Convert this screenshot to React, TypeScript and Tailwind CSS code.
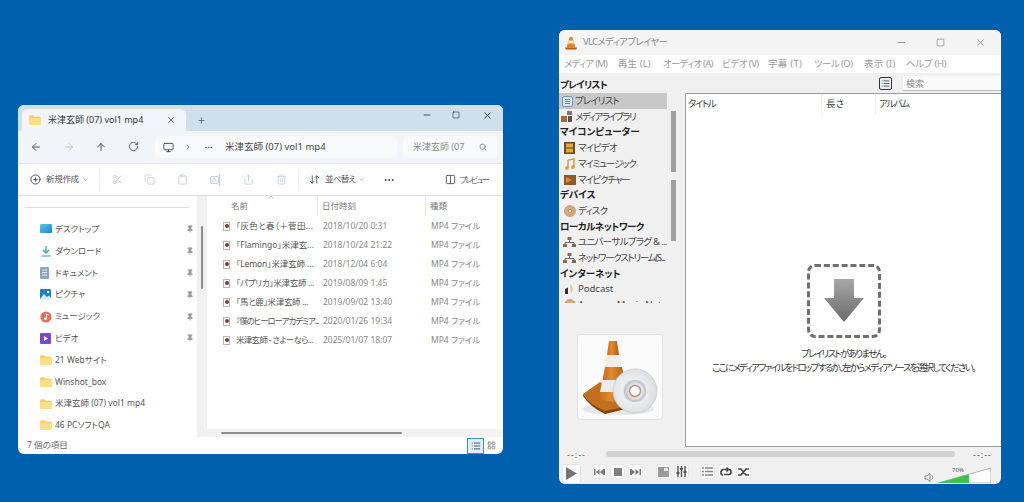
import React from "react";
import { ArrowLeft, ArrowRight, ArrowUp, RotateCw, Monitor, ChevronRight, Ellipsis, Search, Scissors, Copy, Clipboard, Share, Trash2, ArrowDownUp, ChevronDown, ChevronUp, Plus, X, Minus, Square, Pin, Columns2, CirclePlus, List, LayoutGrid } from "lucide-react";

const jp = "font-['Noto_Sans','Noto_Sans_CJK_JP',sans-serif] [font-feature-settings:'palt']";

function Folder({ s = 12 }: { s?: number }) {
  return (
    <svg width={s} height={s * 0.85} viewBox="0 0 16 13" className="shrink-0">
      <path d="M0 2 Q0 0 2 0 H6 L8 2 H14 Q16 2 16 4 V11 Q16 13 14 13 H2 Q0 13 0 11 Z" fill="#f6cf62" />
      <path d="M0 4 H16 V11 Q16 13 14 13 H2 Q0 13 0 11 Z" fill="#fbdf8c" />
    </svg>
  );
}

function NavIcon({ kind }: { kind: string }) {
  if (kind === "desktop")
    return (
      <svg width="12" height="10" viewBox="0 0 12 10"><defs><linearGradient id="dg" x1="0" y1="0" x2="1" y2="1"><stop offset="0" stopColor="#62c6e8" /><stop offset="1" stopColor="#1a86c4" /></linearGradient></defs><rect width="12" height="9" rx="1" fill="url(#dg)" /></svg>
    );
  if (kind === "down")
    return (
      <svg width="12" height="12" viewBox="0 0 12 12"><path d="M6 1 V8 M3 5 L6 8 L9 5" stroke="#3fa3a8" strokeWidth="1.3" fill="none" /><path d="M1.5 11 H10.5" stroke="#5bb6bb" strokeWidth="1.3" /></svg>
    );
  if (kind === "doc")
    return (
      <svg width="10" height="12" viewBox="0 0 10 12"><rect width="9" height="12" rx="1" fill="#8ea3c2" /><path d="M2 3 H7 M2 5.5 H7 M2 8 H7" stroke="#dfe6f0" strokeWidth="1" /></svg>
    );
  if (kind === "pic")
    return (
      <svg width="11" height="11" viewBox="0 0 11 11"><rect width="11" height="11" rx="1" fill="#1b80c9" /><path d="M0 10 L4 5 L7 8 L9 6.5 L11 9 V11 H0 Z" fill="#d4eefa" /><circle cx="8" cy="3" r="1.2" fill="#fff" /></svg>
    );
  if (kind === "music")
    return (
      <svg width="12" height="12" viewBox="0 0 12 12"><circle cx="6" cy="6" r="5.6" fill="#e0705f" /><path d="M6.5 3 V7.5 M6.5 3 L8.5 3.8" stroke="#fff" strokeWidth="1" fill="none" /><circle cx="5.3" cy="7.8" r="1.3" fill="#fff" /></svg>
    );
  if (kind === "video")
    return (
      <svg width="11" height="11" viewBox="0 0 11 11"><rect width="11" height="11" rx="1" fill="#7d4bc9" /><path d="M4 3 L8 5.5 L4 8 Z" fill="#fff" /></svg>
    );
  return <Folder />;
}

const navItems: [string, string, boolean][] = [
  ["desktop", "デスクトップ", true],
  ["down", "ダウンロード", true],
  ["doc", "ドキュメント", true],
  ["pic", "ピクチャ", true],
  ["music", "ミュージック", true],
  ["video", "ビデオ", true],
  ["folder", "21 Webサイト", false],
  ["folder", "Winshot_box", false],
  ["folder", "米津玄師 (07) vol1 mp4", false],
  ["folder", "46 PCソフトQA", false],
];

const files = [
  ["「灰色と春（＋菅田...", "2018/10/20 0:31", "tracking-[0.3px]"],
  ["「Flamingo」米津玄...", "2018/10/24 21:22", "tracking-[0px]"],
  ["「Lemon」米津玄師 ...", "2018/12/04 6:04", "tracking-[-0.1px]"],
  ["「パプリカ」米津玄師 ...", "2019/08/09 1:45", "tracking-[-0.3px]"],
  ["「馬と鹿」米津玄師 ...", "2019/09/02 13:40", "tracking-[-0.3px]"],
  ["『僕のヒーローアカデミア...", "2020/01/26 19:34", "tracking-[-1.1px]"],
  ["米津玄師 - さよーなら...", "2025/01/07 18:07", "tracking-[-0.7px]"],
];

function FileIcon() {
  return (
    <span className="w-[7px] h-[9px] border border-[#b5b5b5] bg-white flex items-center justify-center shrink-0 mr-[6px]">
      <span className="w-[4px] h-[4px] rounded-full bg-[#7c3b3b]" />
    </span>
  );
}

function ToolBtn({ children }: { children: React.ReactNode }) {
  return <div className="w-[32.8px] flex justify-center text-[#c3d0da]">{children}</div>;
}

function Explorer() {
  return (
    <div className={`absolute left-[18px] top-[105px] w-[485px] h-[349px] rounded-[6px] overflow-hidden bg-white flex flex-col ${jp} text-[#444]`}>
      <div className="h-[26px] bg-[#cfe0ec] flex items-end pl-[4px] shrink-0">
        <div className="w-[164px] h-[22px] bg-[#f2f6fa] rounded-t-[6px] flex items-center pl-[7px]">
          <Folder s={12} />
          <span className="ml-[7px] text-[9px] text-[#333] flex-1 whitespace-nowrap">米津玄師 (07) vol1 mp4</span>
          <X size={10} className="mr-[10px] text-[#444]" />
        </div>
        <div className="w-[30px] h-[22px] flex items-center justify-center"><Plus size={9} className="text-[#555]" /></div>
        <div className="flex-1" />
        <div className="self-start h-[20px] flex items-center text-[#333]">
          <Minus size={10} className="mr-[20px]" />
          <Square size={8} className="mr-[22px]" />
          <X size={11} className="mr-[10px]" />
        </div>
      </div>
      <div className="h-[33px] bg-[#f1f5f9] flex items-center shrink-0 border-b border-[#e2e6ea]">
        <div className="w-[137px] flex pl-[12px] text-[#555]">
          <div className="w-[33px]"><ArrowLeft size={12} /></div>
          <div className="w-[32px] text-[#bcc4cb]"><ArrowRight size={12} /></div>
          <div className="w-[33px]"><ArrowUp size={12} /></div>
          <div><RotateCw size={11} /></div>
        </div>
        <div className="w-[242px] h-[22px] bg-[#f8fafc] rounded-[4px] flex items-center pl-[8px] text-[9px] text-[#444]">
          <Monitor size={11} className="mr-[10px]" />
          <ChevronRight size={8} className="mr-[12px]" />
          <Ellipsis size={9} className="mr-[12px]" />
          <span className="text-[9.5px] whitespace-nowrap">米津玄師 (07) vol1 mp4</span>
        </div>
        <div className="ml-[6px] w-[94px] h-[22px] bg-[#f8fafc] rounded-[4px] flex items-center pl-[10px] justify-between text-[9px] text-[#888]">
          <span className="whitespace-nowrap">米津玄師 (07</span>
          <Search size={8} className="mr-[10px] text-[#666]" />
        </div>
      </div>
      <div className="h-[32px] bg-white flex items-center shrink-0 border-b border-[#dcdcdc] text-[8.5px]">
        <CirclePlus size={11} className="ml-[12px] text-[#444]" />
        <span className="ml-[5px] w-[33px] text-[#555] whitespace-nowrap tracking-[-0.3px]">新規作成</span>
        <ChevronDown size={7} className="ml-[3px] text-[#888]" />
        <div className="ml-[10px] w-px h-[18px] bg-[#eee] mr-[0.8px]" />
        <ToolBtn><Scissors size={11} /></ToolBtn>
        <ToolBtn><Copy size={11} /></ToolBtn>
        <ToolBtn><Clipboard size={11} /></ToolBtn>
        <ToolBtn>
          <svg width="12" height="12" viewBox="0 0 12 12" fill="none" stroke="currentColor"><rect x=".5" y="2.5" width="8" height="7" rx="1.5" /><path d="M2.5 8 L4.5 4 L6.5 8 M9.5 .5 V11.5" /></svg>
        </ToolBtn>
        <ToolBtn><Share size={11} /></ToolBtn>
        <ToolBtn><Trash2 size={11} /></ToolBtn>
        <div className="w-px h-[18px] bg-[#eee] ml-[0.5px]" />
        <ArrowDownUp size={11} className="ml-[10px] text-[#456]" />
        <span className="ml-[5px] w-[30px] text-[#555] whitespace-nowrap tracking-[-0.8px]">並べ替え</span>
        <ChevronDown size={7} className="ml-[3px] text-[#888]" />
        <Ellipsis size={12} className="ml-[18px] text-[#333]" />
        <div className="flex-1" />
        <Columns2 size={11} className="text-[#555]" />
        <span className="ml-[4px] mr-[15px] text-[#555] whitespace-nowrap text-[8px] tracking-[-1.6px]">プレビュー</span>
      </div>
      <div className="flex-1 flex min-h-0">
        <div className="w-[179px] shrink-0 pl-[7px] pt-[11px]">
          <div className="w-[165px] h-px bg-[#dedede]" />
          <div className="mt-[10.5px] flex flex-col">
            {navItems.map(([k, t, p], i) => (
              <div key={i} className="h-[21.8px] flex items-center">
                <div className="w-[16px] ml-[15px] flex justify-start"><NavIcon kind={k} /></div>
                <span className="ml-[-1px] flex-1 text-[8.5px] text-[#555] whitespace-nowrap">{t}</span>
                {p && <Pin size={8} fill="#9a9a9a" className="mr-[3px] text-[#9a9a9a]" />}
              </div>
            ))}
          </div>
        </div>
        <div className="w-[10px] shrink-0 bg-[#f1f1f1] flex justify-center pt-[30px]">
          <div className="w-[2px] h-[63px] bg-[#8a8a8a] rounded-full" />
        </div>
        <div className="flex-1 flex flex-col min-w-0 text-[8.5px]">
          <div className="flex-1 pl-[16px] text-[#777] relative">
            <ChevronUp size={8} className="absolute left-[60px] top-[-3px] text-[#999]" />
            <div className="h-[20px] flex items-center">
              <div className="w-[95px] pl-[8px] h-full flex items-center border-r border-[#e8e8e8]">名前</div>
              <div className="w-[108px] pl-[4px] h-full flex items-center border-r border-[#e8e8e8]">日付時刻</div>
              <div className="pl-[4px]">種類</div>
            </div>
            <div className="mt-[0.5px] flex flex-col">
              {files.map(([n, d, tr]) => (
                <div key={d} className="h-[19px] flex items-center">
                  <div className="w-[100px] flex items-center text-[#555] whitespace-nowrap"><FileIcon /><span className={tr}>{n}</span></div>
                  <div className="w-[108px] text-[#888]">{d}</div>
                  <div className="text-[#888]">MP4 ファイル</div>
                </div>
              ))}
            </div>
          </div>
          <div className="h-[8px] bg-[#f3f3f3] flex items-center shrink-0 pl-[14px]">
            <div className="w-[181px] h-[2px] bg-[#8d8d8d] rounded-full" />
          </div>
        </div>
      </div>
      <div className="h-[17px] shrink-0 flex items-center pl-[9px] text-[8.5px] text-[#666]">
        <span className="flex-1">7 個の項目</span>
        <div className="w-[17px] h-[16px] border border-[#3a8fd0] bg-[#e2eef8] flex items-center justify-center"><List size={10} className="text-[#334]" /></div>
        <div className="w-[15px] h-[16px] mr-[4px] flex items-center justify-center"><LayoutGrid size={9} className="text-[#777]" /></div>
      </div>
    </div>
  );
}

function Cone({ s = 14 }: { s?: number }) {
  return (
    <svg width={s} height={s} viewBox="0 0 16 16">
      <path d="M6.5 1 H9.5 L13 13 H3 Z" fill="#e8811c" />
      <path d="M5.4 5 H10.6 L11.4 8.5 H4.5 Z" fill="#f6e9da" />
      <path d="M1 13 H15 L14 15.5 H2 Z" fill="#b85e12" />
    </svg>
  );
}

type Row = { t: string; h?: boolean; i?: string; sel?: boolean; tr?: string; top?: boolean };
const rows: Row[] = [
  { t: "プレイリスト", i: "list", sel: true, tr: "tracking-[-0.9px]", top: true },
  { t: "メディアライブラリ", i: "lib", tr: "tracking-[-1.5px]", top: true },
  { t: "マイコンピューター", h: true },
  { t: "マイビデオ", i: "film", tr: "tracking-[-0.9px]" },
  { t: "マイミュージック", i: "note", tr: "tracking-[-1.2px]" },
  { t: "マイピクチャー", i: "pic", tr: "tracking-[-1.2px]" },
  { t: "デバイス", h: true },
  { t: "ディスク", i: "disc", tr: "tracking-[-0.9px]" },
  { t: "ローカルネットワーク", h: true, tr: "tracking-[-0.5px]" },
  { t: "ユニバーサルプラグ & ...", i: "net", tr: "tracking-[-0.7px]" },
  { t: "ネットワークストリーム(S...", i: "net", tr: "tracking-[-1.3px]" },
  { t: "インターネット", h: true },
  { t: "Podcast", i: "pod" },
  { t: "Amazon Music Net", i: "disc" },
];

function RowIcon({ k }: { k?: string }) {
  switch (k) {
    case "list":
      return <svg width="11" height="11" viewBox="0 0 11 11"><rect x=".5" y=".5" width="10" height="10" rx="1.5" fill="#dbe6f3" stroke="#6f94bd" /><path d="M3 3.5 H8 M3 5.5 H8 M3 7.5 H8" stroke="#5b7fa8" /></svg>;
    case "lib":
      return <svg width="12" height="11" viewBox="0 0 12 11"><rect y="5" width="6" height="6" fill="#a86a30" /><rect x="6" y="0" width="5" height="4" fill="#777" /><rect x="7" y="5" width="4" height="6" fill="#555" /></svg>;
    case "film":
      return <svg width="11" height="12" viewBox="0 0 11 12"><rect width="11" height="12" fill="#6b4a20" /><rect x="2" y="1.5" width="7" height="4" fill="#e6a83c" /><rect x="2" y="6.5" width="7" height="4" fill="#e6a83c" /></svg>;
    case "note":
      return <svg width="11" height="12" viewBox="0 0 11 12"><path d="M4 2 L10 1 V9" stroke="#d9a24c" strokeWidth="1.6" fill="none" /><path d="M4 2 V10" stroke="#d9a24c" strokeWidth="1.6" /><circle cx="3" cy="10" r="2" fill="#d9a24c" /><circle cx="9" cy="9" r="2" fill="#d9a24c" /></svg>;
    case "pic":
      return <svg width="12" height="10" viewBox="0 0 12 10"><rect width="12" height="10" fill="#8a5a34" /><path d="M2 2 L8 5 L2 8 Z" fill="#e8853a" /></svg>;
    case "disc":
      return <svg width="12" height="12" viewBox="0 0 12 12"><circle cx="6" cy="6" r="5.5" fill="#d9a878" stroke="#a8886a" strokeWidth=".6" /><circle cx="6" cy="6" r="1.6" fill="#fff" stroke="#a06a3a" strokeWidth=".6" /></svg>;
    case "net":
      return <svg width="13" height="11" viewBox="0 0 13 11"><rect x="4.5" y="0" width="4" height="3" fill="#8a6a44" /><rect x="0" y="7" width="4" height="3" fill="#8a6a44" /><rect x="9" y="7" width="4" height="3" fill="#8a6a44" /><path d="M6.5 3 V5.5 M2 7 V5.5 H11 V7" stroke="#666" fill="none" /></svg>;
    case "pod":
      return <svg width="12" height="12" viewBox="0 0 12 12"><path d="M1 6 L4 4.5 V11 H1 Z" fill="#333" /><path d="M6 1 Q11 5 7 11 Z" fill="#e8c49a" /></svg>;
    default:
      return null;
  }
}

function CtlBtn({ children, w = "w-[15px]" }: { children: React.ReactNode; w?: string }) {
  return <div className={`${w} h-[15px] rounded-[3px] bg-[#fbfbfb] border border-[#e6e6e6] flex items-center justify-center shrink-0`}>{children}</div>;
}

function BigCone() {
  return (
    <svg width="84" height="84" viewBox="0 0 84 84">
      <defs>
        <linearGradient id="cg" x1="0" y1="0" x2="1" y2="0"><stop offset="0" stopColor="#c96a18" /><stop offset=".4" stopColor="#e08a30" /><stop offset="1" stopColor="#b05c14" /></linearGradient>
        <radialGradient id="disc" cx=".45" cy=".5" r=".6"><stop offset="0" stopColor="#c5c5d2" /><stop offset=".45" stopColor="#eeeef0" /><stop offset="1" stopColor="#d6dadb" /></radialGradient>
      </defs>
      <ellipse cx="40" cy="74" rx="36" ry="6" fill="#d8d8d8" opacity=".6" />
      <path d="M5 59 L22 47 L50 60 L52 73 L27 78 Q12 70 5 59Z" fill="#c0701f" />
      <path d="M5 59 Q12 70 27 76 L52 71 L52 73 L27 79 Q12 72 5 61Z" fill="#7f4510" />
      <path d="M31 6 H39 L41 20 H29 Z" fill="url(#cg)" />
      <path d="M29 20 H41 L44 32 H27 Z" fill="#efeeec" />
      <path d="M27 32 H44 L47 45 H24.5 Z" fill="url(#cg)" />
      <path d="M24.5 45 H47 L50 57 H22 Z" fill="#ecebe8" />
      <path d="M22 57 H50 L51 64 Q36 70 20 63 Z" fill="url(#cg)" />
      <circle cx="57" cy="56" r="22" fill="url(#disc)" stroke="#c9cacb" strokeWidth=".8" />
      <circle cx="57" cy="56" r="10" fill="none" stroke="#b9b9c9" strokeWidth="2.5" opacity=".7" />
      <circle cx="57" cy="56" r="5.5" fill="#fff" stroke="#b89c84" strokeWidth="1.5" />
    </svg>
  );
}

const menus: [string, string, string][] = [
  ["メディア (M)", "w-[54px]", "tracking-[-0.8px]"],
  ["再生 (L)", "w-[45px]", "tracking-[0.1px]"],
  ["オーディオ (A)", "w-[59px]", "tracking-[-0.8px]"],
  ["ビデオ (V)", "w-[46px]", "tracking-[-0.5px]"],
  ["字幕 (T)", "w-[46px]", "tracking-[0.3px]"],
  ["ツール (O)", "w-[50px]", "tracking-[-0.6px]"],
  ["表示 (I)", "w-[42px]", "tracking-[0.2px]"],
  ["ヘルプ (H)", "w-[50px]", "tracking-[-0.3px]"],
];

function VLC() {
  return (
    <div className={`absolute left-[559px] top-[30px] w-[442px] h-[454px] rounded-[6px] overflow-hidden bg-[#f0f0f0] flex flex-col ${jp} text-[#444]`}>
      <div className="h-[25px] shrink-0 bg-[#f4f4f4] flex items-center pl-[5px]">
        <Cone />
        <span className="ml-[5px] flex-1 text-[9.5px] text-[#8a8a8a] tracking-[-0.7px]">VLCメディアプレイヤー</span>
        <Minus size={11} className="mr-[29px] text-[#888]" />
        <Square size={9} className="mr-[30px] text-[#888]" />
        <X size={11} className="mr-[15px] text-[#888]" />
      </div>
      <div className="h-[18px] shrink-0 bg-white flex items-center pl-[5px] text-[9.5px] text-[#9a9a9a] whitespace-nowrap">
        {menus.map(([m, w, tr]) => (
          <span key={m} className={`${w} ${tr} shrink-0`}>{m}</span>
        ))}
      </div>
      <div className="flex-1 flex flex-col min-h-0">
        <div className="flex-1 flex min-h-0">
          <div className="w-[126px] shrink-0 flex flex-col">
            <div className="h-[230px] flex shrink-0 pt-[3px]">
              <div className="w-[108px] shrink-0 overflow-hidden h-[227px]">
                <div className="h-[17.4px] flex items-center pl-[1px] text-[9.5px] font-bold text-[#222] whitespace-nowrap tracking-[-0.7px]">プレイリスト</div>
                {rows.map((r, i) => (
                  <div key={i} className={`h-[15.7px] flex items-center whitespace-nowrap ${r.sel ? "bg-[#c8c8c8]" : ""}`}>
                    {r.h ? (
                      <span className={`pl-[1px] text-[9.5px] font-bold text-[#222] ${r.tr ?? ""}`}>{r.t}</span>
                    ) : (
                      <>
                        <div className={`${r.top ? "ml-[1px] w-[14px]" : "ml-[3px] w-[15px]"} flex justify-center shrink-0`}><RowIcon k={r.i} /></div>
                        <span className={`ml-[1px] text-[9.5px] text-[#444] ${r.tr ?? ""}`}>{r.t}</span>
                      </>
                    )}
                  </div>
                ))}
              </div>
              <div className="ml-[4px] w-[5px] pt-[35px] flex flex-col gap-[8px]">
                <div className="h-[61px] bg-[#a0a0a0]" />
                <div className="h-[61px] bg-[#a0a0a0]" />
              </div>
            </div>
            <div className="ml-[18px] mt-[31px] w-[86px] h-[86px] rounded-[4px] bg-[#fbfbfb] border border-[#e3e3e3] flex items-center justify-center overflow-hidden"><BigCone /></div>
          </div>
          <div className="flex-1 flex flex-col min-w-0">
            <div className="h-[20px] shrink-0 flex items-center">
              <div className="flex-1" />
              <div className="w-[13px] h-[13px] rounded-[2px] border border-[#333] bg-[#e8eef2] flex items-center justify-center"><List size={9} className="text-[#333]" /></div>
              <div className="ml-[11px] w-[98px] h-[15px] bg-[#fafafa] border-b border-[#bbb] pl-[3px] text-[9px] leading-[15px] text-[#888]">検索</div>
            </div>
            <div className="flex-1 bg-white border border-[#9c9c9c] border-r-0 flex flex-col min-h-0 text-[9.5px] text-[#444]">
              <div className="h-[21px] shrink-0 flex items-center">
                <div className="w-[136px] pl-[2px] h-full flex items-center border-r border-[#eee] tracking-[-1.4px]">タイトル</div>
                <div className="w-[54px] pl-[4px] h-full flex items-center border-r border-[#eee]">長さ</div>
                <div className="pl-[3px] tracking-[-1.4px]">アルバム</div>
              </div>
              <div className="flex-1 flex flex-col items-center pt-[149px]">
                <div className="w-[74px] h-[74px] rounded-[8px] border-[3px] border-dashed border-[#6f6f6f] flex items-center justify-center">
                  <svg width="42" height="44" viewBox="0 0 42 44"><defs><linearGradient id="ar" x1="0" y1="0" x2="0" y2="1"><stop offset="0" stopColor="#a8a8a8" /><stop offset="1" stopColor="#6a6a6a" /></linearGradient></defs><path d="M11 0 H31 V19 H41 L21 43 L1 19 H11 Z" fill="url(#ar)" /></svg>
                </div>
                <div className="mt-[9px] text-[9.5px] leading-[13.5px] text-center text-[#333] whitespace-nowrap tracking-[-1.7px]">
                  <div>プレイリストがありません。</div>
                  <div>ここにメディアファイルをドロップするか、左からメディアソースを選択してください。</div>
                </div>
              </div>
            </div>
          </div>
        </div>
        <div className="h-[37px] shrink-0 flex flex-col">
          <div className="h-[10px] flex items-center pl-[8px] pr-[9px] text-[9px] tracking-[1px] text-[#555] mt-[2px]">
            <span className="w-[39px] leading-none">--:--</span>
            <div className="flex-1 h-[6px] rounded-full bg-[#d2d2d2]" />
            <span className="w-[37px] text-right leading-none">--:--</span>
          </div>
          <div className="flex-1 flex items-center pl-[3px] relative">
            <div className="w-[19px] h-[20px] mt-[4px] rounded-[3px] bg-[#fcfcfc] border border-[#e4e4e4] flex items-center justify-center shrink-0">
              <svg width="11" height="13" viewBox="0 0 11 13"><path d="M0 0 L11 6.5 L0 13 Z" fill="#757575" /></svg>
            </div>
            <div className="ml-[11px] flex gap-[3px]">
              <CtlBtn><svg width="11" height="6" viewBox="0 0 11 6"><path d="M0 0 H1.5 V6 H0 Z M5.5 0 V6 L2 3 Z M9.5 0 V6 L6 3 Z M9.5 0 H11 V6 H9.5 Z" fill="#777" /></svg></CtlBtn>
              <CtlBtn><div className="w-[8px] h-[8px] bg-[#808080]" /></CtlBtn>
              <CtlBtn><svg width="11" height="6" viewBox="0 0 11 6"><path d="M0 0 H1.5 V6 H0 Z M1.5 0 L5 3 L1.5 6 Z M5.5 0 L9 3 L5.5 6 Z M9.5 0 H11 V6 H9.5 Z" fill="#777" /></svg></CtlBtn>
            </div>
            <div className="ml-[13px] flex gap-[3px]">
              <CtlBtn><svg width="11" height="10" viewBox="0 0 11 10"><rect width="11" height="10" fill="#9a9a9a" /><rect x="6" y="1" width="4" height="3" fill="#e8e8e8" /></svg></CtlBtn>
              <CtlBtn><svg width="11" height="11" viewBox="0 0 11 11" stroke="#555" strokeWidth="1.5"><path d="M2 0 V11 M5.5 0 V11 M9 0 V11" /><path d="M0.5 7 H3.5 M4 3 H7 M7.5 6 H10.5" strokeWidth="2" /></svg></CtlBtn>
            </div>
            <div className="ml-[11px] flex gap-[3px]">
              <CtlBtn><svg width="11" height="9" viewBox="0 0 11 9" stroke="#888"><path d="M0 1 H2 M3 1 H11 M0 4.5 H2 M3 4.5 H11 M0 8 H2 M3 8 H11" strokeWidth="1.3" /></svg></CtlBtn>
              <CtlBtn><svg width="12" height="10" viewBox="0 0 12 10" fill="none" stroke="#444" strokeWidth="1.6"><path d="M3 8 H2.5 Q1 8 1 5.5 Q1 2.5 3 2.5 H8.5 M6.5 0.5 L8.5 2.5 L6.5 4.5 M9 2.5 Q11 2.5 11 5 Q11 7.5 9 7.5 H4" /></svg></CtlBtn>
              <CtlBtn><svg width="12" height="10" viewBox="0 0 12 10" fill="none" stroke="#444" strokeWidth="1.7"><path d="M0 2 H3 L8 8 H11 M0 8 H3 L8 2 H11" /></svg></CtlBtn>
            </div>
            <div className="flex-1" />
            <div className="flex items-end mr-[10px] mt-[7px]">
              <svg width="11" height="11" viewBox="0 0 11 11" className="mr-[3px]" fill="none" stroke="#888"><path d="M1 4 H3 L6 1.5 V9.5 L3 7 H1 Z" /><path d="M8 3.5 Q9.5 5.5 8 7.5" /></svg>
              <div className="relative w-[53px] h-[15px]">
                <svg width="53" height="15" viewBox="0 0 53 15" className="absolute inset-0">
                  <path d="M0 15 L53 0 V15 Z" fill="#fff" stroke="#9c9c9c" strokeWidth=".8" />
                  <path d="M0 15 L31 6.2 V15 Z" fill="#3cc24a" />
                </svg>
                <span className="absolute left-[14px] top-[-1px] text-[6px] text-[#555] leading-none">70%</span>
              </div>
            </div>
          </div>
        </div>
      </div>
    </div>
  );
}

export default function App() {
  return (
    <div className="relative w-[1024px] h-[502px] overflow-hidden bg-[#0060ad]">
      <Explorer />
      <VLC />
    </div>
  );
}
